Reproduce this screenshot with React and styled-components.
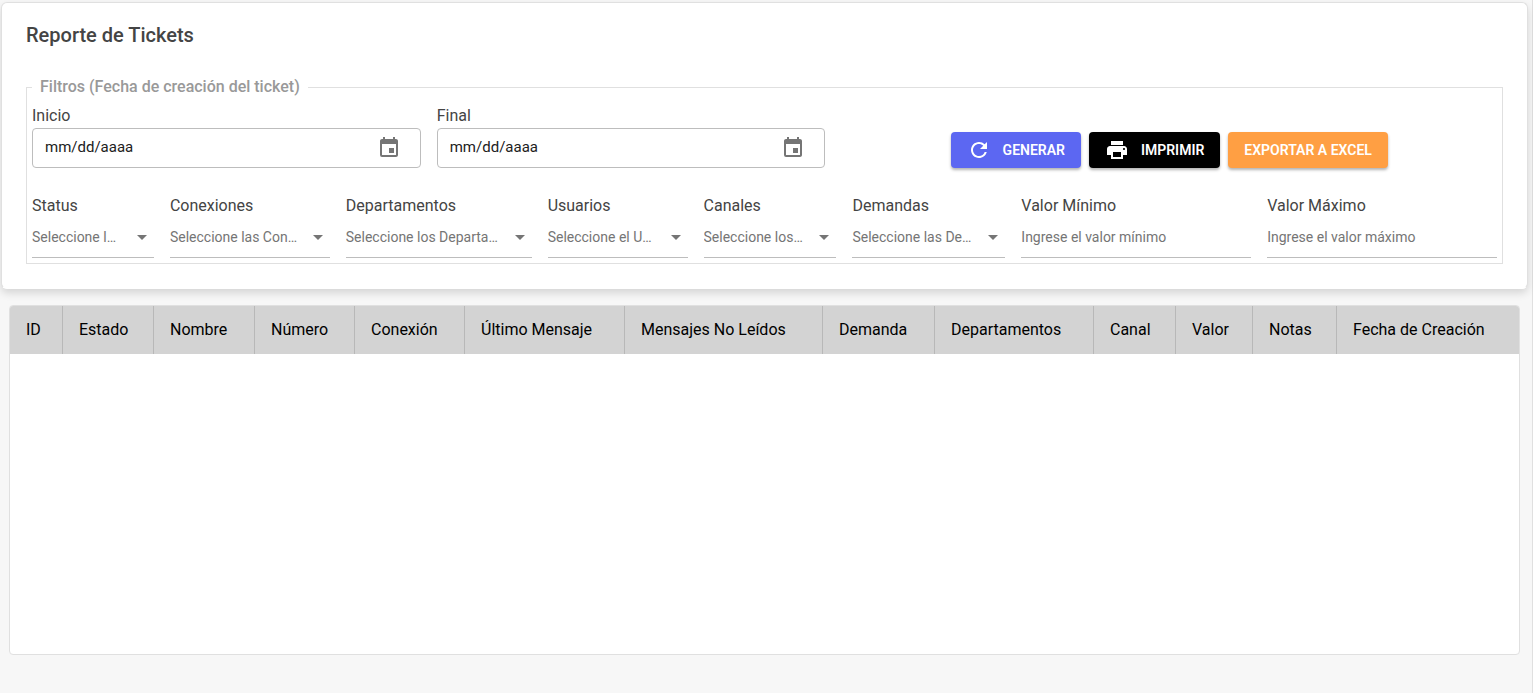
import React from "react";
import { useState } from "react";
import styled, { createGlobalStyle } from "styled-components";
import { MdArrowDropDown, MdEvent, MdPrint, MdRefresh } from "react-icons/md";

const GlobalStyle = createGlobalStyle`
    *, *::before, *::after {
        box-sizing: border-box;
    }
    body {
        margin: 0;
        background: #f7f7f7;
        color: #444;
        font-family: Roboto, "Liberation Sans", sans-serif;
        font-size: 16px;
    }
    input, select, button {
        font-family: inherit;
    }
`;

const Page = styled.main`
    min-height: 100vh;
    padding: 2px 4px 38px 1px;
    border-right: 1px solid #e0e0e0;
`;

const Card = styled.section`
    padding: 20px 24px 24px;
    background: #fff;
    border: 1px solid #e0e0e0;
    border-bottom-color: #fff;
    border-radius: 6px;
    box-shadow: 0 4px 8px rgba(0, 0, 0, 0.14);
`;

const Title = styled.h1`
    margin: 0 0 31px;
    font-size: 20px;
    font-weight: 500;
    line-height: 24px;
`;

const Filters = styled.fieldset`
    min-width: 0;
    margin: 0;
    padding: 10px 5px 5px;
    border: 1px solid #e0e0e0;
`;

const Legend = styled.legend`
    padding: 0 8px;
    color: #999;
    font-weight: 500;
    line-height: 18px;
`;

const TopRow = styled.div`
    display: grid;
    grid-template-columns: minmax(0, 389fr) minmax(0, 389fr) minmax(0, 656fr);
    align-items: end;
    gap: 16px;
`;

const BottomRow = styled.div`
    display: flex;
    gap: 16px;
    margin-top: 28px;
`;

const Field = styled.div`
    display: flex;
    flex-direction: column;
    flex: ${(props) => props.$grow || 1} 1 0;
    min-width: 0;
`;

const Label = styled.label`
    line-height: 20px;
    margin-bottom: ${(props) => (props.$spaced ? "1px" : "2px")};
`;

const DateBox = styled.div`
    display: flex;
    align-items: center;
    height: 40px;
    padding: 0 19px 0 12px;
    border: 1px solid #bdbdbd;
    border-radius: 4px;
`;

const DateInput = styled.input`
    flex: 1;
    min-width: 0;
    padding: 0 0 2px;
    border: none;
    outline: none;
    background: transparent;
    color: #212121;
    font-size: 15px;
    &::placeholder {
        color: #212121;
        opacity: 1;
    }
`;

const CalendarButton = styled.button`
    display: flex;
    padding: 0;
    border: none;
    background: none;
    color: #757575;
    cursor: pointer;
`;

const Actions = styled.div`
    display: flex;
    justify-content: center;
    gap: 8px;
`;

const Button = styled.button`
    display: flex;
    align-items: center;
    gap: 12px;
    height: 36px;
    padding: 0 16px;
    border: none;
    border-radius: 4px;
    background: ${(props) => props.$color};
    color: #fff;
    font-size: 14px;
    font-weight: 600;
    text-transform: uppercase;
    white-space: nowrap;
    box-shadow: 0 2px 3px rgba(0, 0, 0, 0.3);
    cursor: pointer;
`;

const SelectBox = styled.div`
    display: grid;
    align-items: center;
    border-bottom: 1px solid #bdbdbd;
    > * {
        grid-area: 1 / 1;
    }
    > svg {
        justify-self: end;
        color: #757575;
        pointer-events: none;
    }
`;

const Select = styled.select`
    width: 100%;
    min-width: 0;
    height: 40px;
    padding: 0 32px 0 0;
    appearance: none;
    border: none;
    outline: none;
    background: transparent;
    color: #757575;
    font-size: 14px;
    text-overflow: ellipsis;
`;

const ValueInput = styled.input`
    width: 100%;
    height: 41px;
    padding: 0;
    border: none;
    border-bottom: 1px solid #bdbdbd;
    outline: none;
    background: transparent;
    font-size: 14px;
    &::placeholder {
        color: #757575;
        opacity: 1;
    }
`;

const TableBox = styled.section`
    min-height: 350px;
    margin: 16px 8px 0;
    overflow: hidden;
    background: #fff;
    border: 1px solid #e0e0e0;
    border-radius: 4px;
`;

const Table = styled.table`
    width: 100%;
    table-layout: fixed;
    border-collapse: separate;
    border-spacing: 0;
`;

const HeadCell = styled.th`
    height: 48px;
    padding: 0 0 2px 16px;
    background: #d3d3d3;
    border-right: 1px solid #b8b8b8;
    color: #000;
    font-weight: 400;
    text-align: left;
    white-space: nowrap;
    &:last-child {
        border-right: none;
    }
`;

const selects = [
    { id: "status", label: "Status", placeholder: "Seleccione los Status", grow: 122 },
    { id: "conexiones", label: "Conexiones", placeholder: "Seleccione las Conexiones", grow: 160 },
    { id: "departamentos", label: "Departamentos", placeholder: "Seleccione los Departamentos", grow: 186 },
    { id: "usuarios", label: "Usuarios", placeholder: "Seleccione el Usuario", grow: 140 },
    { id: "canales", label: "Canales", placeholder: "Seleccione los Canales", grow: 133 },
    { id: "demandas", label: "Demandas", placeholder: "Seleccione las Demandas", grow: 153 },
];

const columns = [
    { name: "ID", width: 53 },
    { name: "Estado", width: 91 },
    { name: "Nombre", width: 101 },
    { name: "Número", width: 100 },
    { name: "Conexión", width: 110 },
    { name: "Último Mensaje", width: 160 },
    { name: "Mensajes No Leídos", width: 198 },
    { name: "Demanda", width: 112 },
    { name: "Departamentos", width: 159 },
    { name: "Canal", width: 82 },
    { name: "Valor", width: 77 },
    { name: "Notas", width: 84 },
    { name: "Fecha de Creación", width: 182 },
];

function DateField({ id, label }) {
    const [value, setValue] = useState("");

    return (
        <Field>
            <Label htmlFor={id}>{label}</Label>
            <DateBox>
                <DateInput
                    id={id}
                    type="text"
                    placeholder="mm/dd/aaaa"
                    value={value}
                    onChange={(e) => setValue(e.target.value)}
                />
                <CalendarButton type="button" aria-label={`Elegir fecha: ${label}`}>
                    <MdEvent size={24} />
                </CalendarButton>
            </DateBox>
        </Field>
    );
}

function SelectField({ id, label, placeholder, grow }) {
    return (
        <Field $grow={grow}>
            <Label $spaced htmlFor={id}>{label}</Label>
            <SelectBox>
                <Select id={id} defaultValue="">
                    <option value="">{placeholder}</option>
                </Select>
                <MdArrowDropDown size={24} />
            </SelectBox>
        </Field>
    );
}

function ValueField({ id, label, placeholder }) {
    return (
        <Field $grow={230}>
            <Label $spaced htmlFor={id}>{label}</Label>
            <ValueInput id={id} type="text" placeholder={placeholder} />
        </Field>
    );
}

export default function App() {
    return (
        <>
            <GlobalStyle />
            <Page>
                <Card>
                    <Title>Reporte de Tickets</Title>
                    <Filters>
                        <Legend>Filtros (Fecha de creación del ticket)</Legend>
                        <TopRow>
                            <DateField id="inicio" label="Inicio" />
                            <DateField id="final" label="Final" />
                            <Actions>
                                <Button type="button" $color="#5c67f2">
                                    <MdRefresh size={24} />
                                    Generar
                                </Button>
                                <Button type="button" $color="#000">
                                    <MdPrint size={24} />
                                    Imprimir
                                </Button>
                                <Button type="button" $color="#ff9f43">
                                    Exportar a Excel
                                </Button>
                            </Actions>
                        </TopRow>
                        <BottomRow>
                            {selects.map((item) => (
                                <SelectField key={item.id} {...item} />
                            ))}
                            <ValueField id="minimo" label="Valor Mínimo" placeholder="Ingrese el valor mínimo" />
                            <ValueField id="maximo" label="Valor Máximo" placeholder="Ingrese el valor máximo" />
                        </BottomRow>
                    </Filters>
                </Card>
                <TableBox>
                    <Table>
                        <colgroup>
                            {columns.map((col) => (
                                <col key={col.name} width={col.width} />
                            ))}
                        </colgroup>
                        <thead>
                            <tr>
                                {columns.map((col) => (
                                    <HeadCell key={col.name} scope="col">{col.name}</HeadCell>
                                ))}
                            </tr>
                        </thead>
                        <tbody />
                    </Table>
                </TableBox>
            </Page>
        </>
    );
}
